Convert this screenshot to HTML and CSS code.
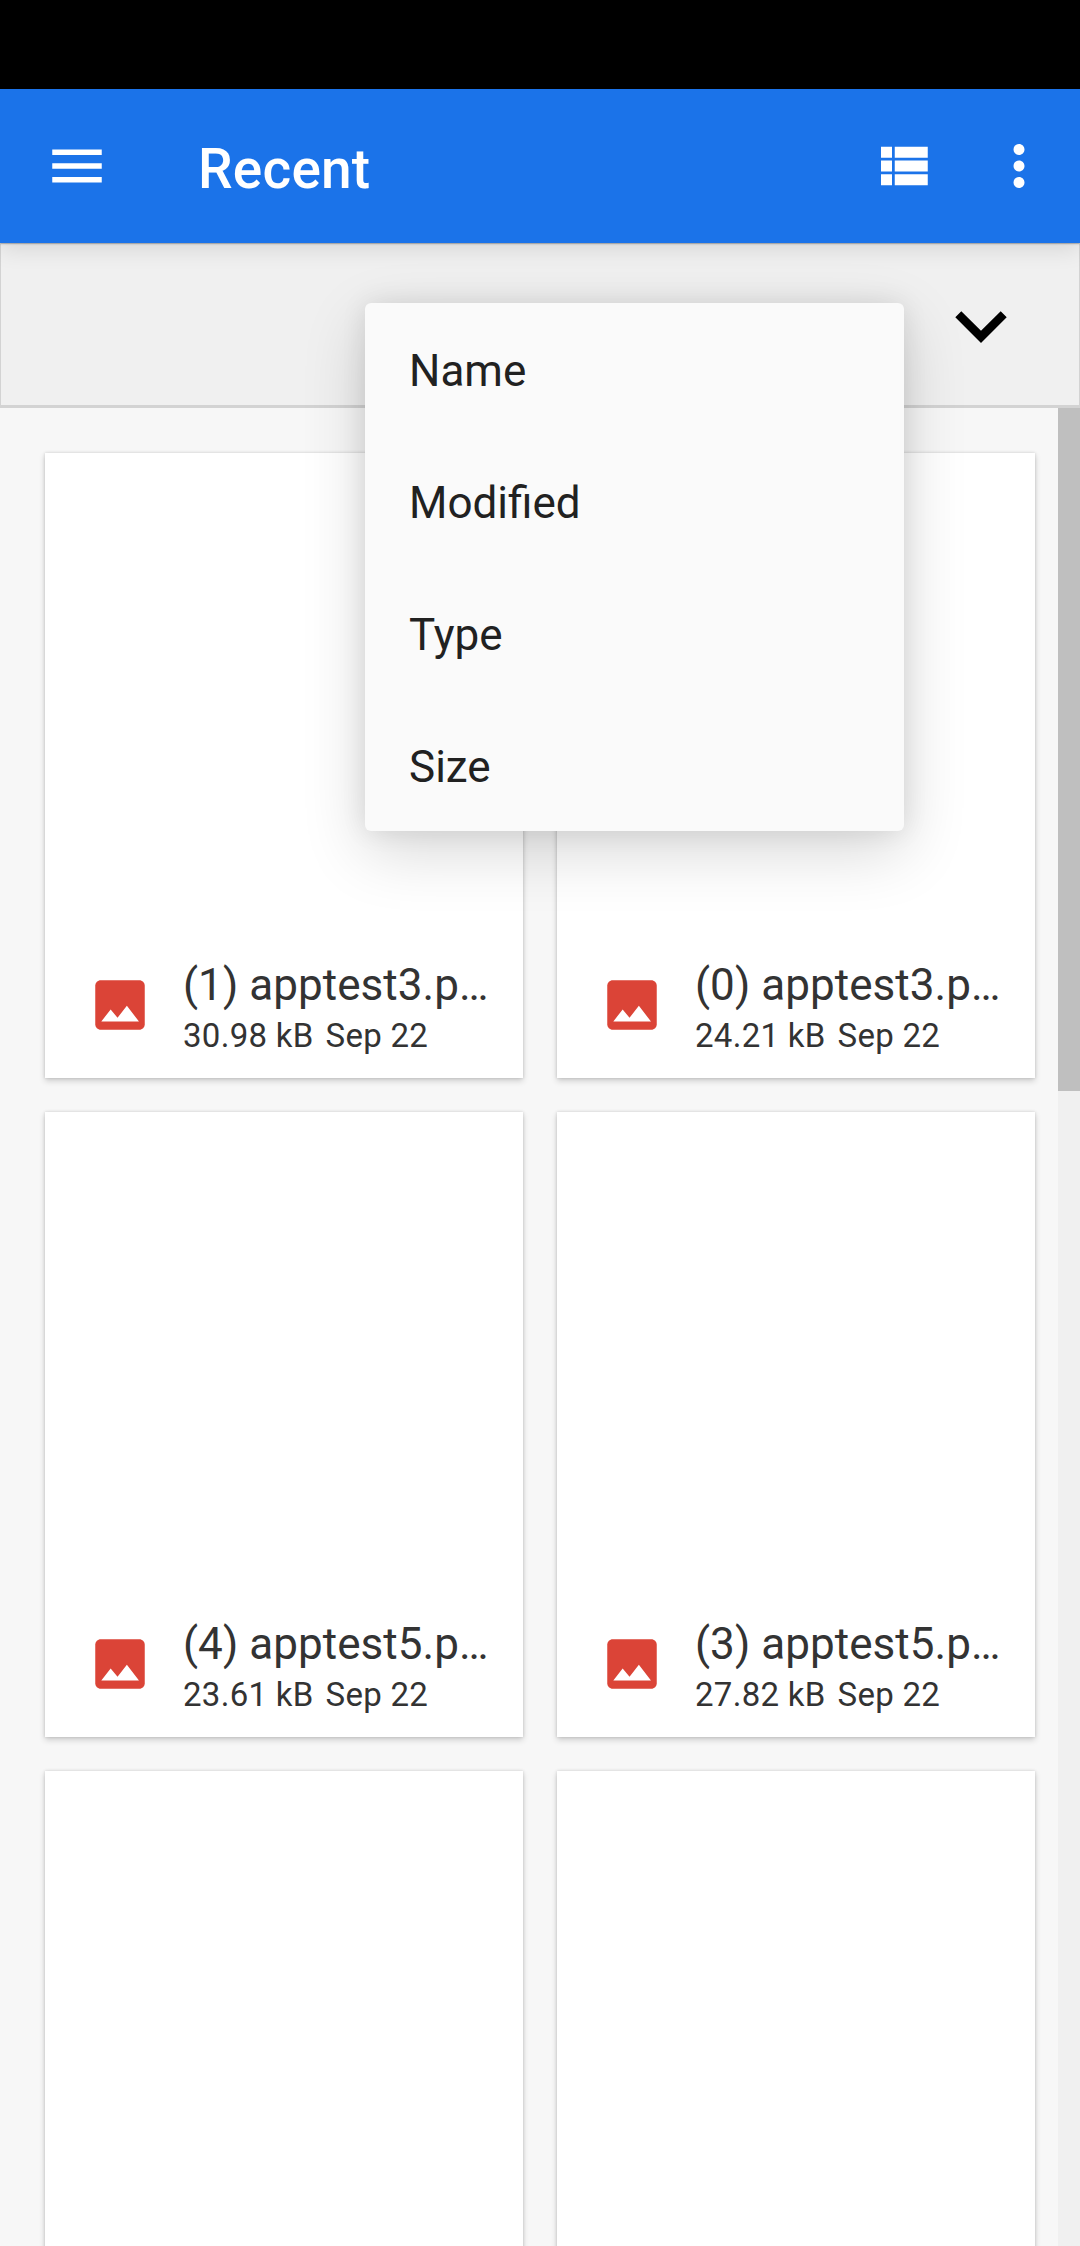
FILE: index.html
```html
<!DOCTYPE html>
<html lang="en">
<head>
<meta charset="utf-8">
<title>Recent</title>
<link rel="stylesheet" href="styles.css">
</head>
<body>
<svg class="defs" aria-hidden="true">
  <symbol id="image" viewBox="0 0 24 24">
    <path fill="#db4437" d="M21 19V5c0-1.100-.9-2-2-2H5c-1.100 0-2 .9-2 2v14c0 1.100.9 2 2 2h14c1.100 0 2-.9 2-2z"/>
    <path fill="#fff" d="M5.200 18 8.600 13.600l2.500 3.010L14.500 12.300 18.900 18z"/>
  </symbol>
</svg>
<div class="screen">
  <div class="status-bar"></div>
  <header class="app-bar">
    <svg class="icon" viewBox="0 0 24 24"><path d="M3 18h18v-2H3v2zm0-5h18v-2H3v2zm0-7v2h18V6H3z"/></svg>
    <h1 class="title">Recent</h1>
    <svg class="icon" viewBox="0 0 24 24"><path d="M4 14h4v-4H4v4zm0 5h4v-4H4v4zM4 9h4V5H4v4zm5 5h12v-4H9v4zm0 5h12v-4H9v4zM9 5v4h12V5H9z"/></svg>
    <svg class="icon more" viewBox="0 0 24 24"><path d="M12 8c1.100 0 2-.9 2-2s-.9-2-2-2-2 .9-2 2 .9 2 2 2zm0 2c-1.100 0-2 .9-2 2s.9 2 2 2 2-.9 2-2-.9-2-2-2zm0 6c-1.100 0-2 .9-2 2s.9 2 2 2 2-.9 2-2-.9-2-2-2z"/></svg>
  </header>
  <div class="sort-bar">
    <svg class="chevron" viewBox="0 0 52 32"><path d="M.3 6.200 6.300.2 26 19.800 45.700.2l6 6L26 31.900z"/></svg>
    <ul class="menu">
      <li>Name</li>
      <li>Modified</li>
      <li>Type</li>
      <li>Size</li>
    </ul>
  </div>
  <main class="content">
    <div class="grid">
      <article class="card"><svg class="icon"><use href="#image"/></svg><div class="info"><div class="name">(1) apptest3.p…</div><div class="meta"><span>30.98 kB</span><span>Sep 22</span></div></div></article>
      <article class="card"><svg class="icon"><use href="#image"/></svg><div class="info"><div class="name">(0) apptest3.p…</div><div class="meta"><span>24.21 kB</span><span>Sep 22</span></div></div></article>
      <article class="card"><svg class="icon"><use href="#image"/></svg><div class="info"><div class="name">(4) apptest5.p…</div><div class="meta"><span>23.61 kB</span><span>Sep 22</span></div></div></article>
      <article class="card"><svg class="icon"><use href="#image"/></svg><div class="info"><div class="name">(3) apptest5.p…</div><div class="meta"><span>27.82 kB</span><span>Sep 22</span></div></div></article>
      <article class="card"></article>
      <article class="card"></article>
    </div>
    <div class="scrollbar"><div class="thumb"></div></div>
  </main>
</div>
</body>
</html>
```

FILE: styles.css
```css
* { box-sizing: border-box; }

body {
  margin: 0;
  font-family: Roboto, sans-serif;
  background: #f7f7f7;
}

.defs { display: none; }

.screen {
  display: flex;
  flex-direction: column;
  width: 1080px;
  height: 2246px;
  overflow: hidden;
}

.status-bar { flex: none; height: 89px; background: #000; }

.app-bar {
  flex: none;
  display: flex;
  align-items: center;
  height: 154px;
  padding: 0 28px 0 44px;
  background: #1b73e9;
  box-shadow: 0 6px 22px rgba(0, 0, 0, .11), 0 1px 2px rgba(0, 0, 0, .2);
  z-index: 2;
}

.icon { flex: none; display: block; width: 66px; height: 66px; fill: #fff; }
.more { margin-left: 50px; }

.title {
  flex: 1;
  margin: 6px 0 0 88px;
  font-size: 55px;
  font-weight: 500;
  line-height: 66px;
  letter-spacing: .2px;
  color: #fff;
}

.sort-bar {
  flex: none;
  position: relative;
  display: flex;
  justify-content: flex-end;
  height: 165px;
  padding: 67px 72px 0 0;
  background: #f0f0f0;
  border: 1px solid #d3d3d3;
  border-bottom-width: 3px;
  z-index: 1;
}

.chevron { width: 52px; height: 32px; }

.menu {
  position: absolute;
  left: 364px;
  top: 59px;
  width: 539px;
  margin: 0;
  padding: 0;
  list-style: none;
  background: #fafafa;
  border-radius: 6px;
  box-shadow: 0 20px 64px rgba(0, 0, 0, .16), 0 0 26px rgba(0, 0, 0, .09);
}

.menu li {
  height: 132px;
  padding: 0 44px;
  font-size: 44px;
  line-height: 136px;
  color: #212121;
}

.content {
  flex: 1;
  min-height: 0;
  display: flex;
  justify-content: space-between;
}

.grid {
  display: grid;
  grid-template-columns: 478px 478px;
  grid-auto-rows: 625px;
  gap: 34px;
  padding: 45px 0 0 45px;
}

.card {
  display: flex;
  align-items: flex-end;
  padding: 0 34px 19px 42px;
  background: #fff;
  box-shadow: 0 3px 6px rgba(0, 0, 0, .17), 0 0 3px rgba(0, 0, 0, .15);
}

.card .icon { margin-bottom: 21px; }

.info { flex: 1; min-width: 0; margin-left: 30px; color: #333; }

.name {
  margin-bottom: 1px;
  white-space: nowrap;
  font-size: 44px;
  line-height: 52px;
  letter-spacing: .05px;
}

.meta { display: flex; gap: 12px; font-size: 33px; line-height: 47px; letter-spacing: .28px; }

.scrollbar { width: 22px; background: #f0f0f0; }
.thumb { height: 683px; background: #bfbfbf; }
```
